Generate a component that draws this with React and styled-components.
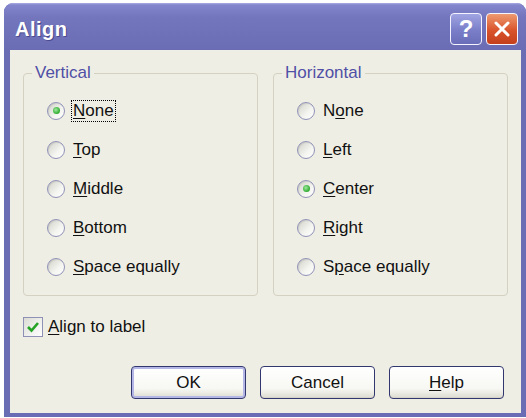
import React from 'react'
import styled, { createGlobalStyle } from 'styled-components'

const GlobalStyle = createGlobalStyle`
body{
    margin:0;
    background:#fff;
    font-family:"Liberation Sans", Arial, sans-serif;
}
`

const Window = styled.div`
margin:3px 0 0 4px;
width:522px;
height:414px;
display:flex;
flex-direction:column;
background:#6a6cb4;
border-radius:9px 9px 0 0;
overflow:hidden;
`

const TitleBar = styled.div`
height:47px;
flex-shrink:0;
box-sizing:border-box;
display:flex;
align-items:center;
padding:5px 8px 0 11px;
background:linear-gradient(to bottom,#a9abe2 0,#8386cc 2px,#7376bd 30%,#6a6cb4 100%);
`

const Title = styled.h1`
flex:1;
margin:0;
font-size:20px;
font-weight:bold;
color:#fff;
text-shadow:1px 1px 0 #4a4b8f;
letter-spacing:.5px;
`

const CaptionBtn = styled.div`
width:32px;
height:32px;
box-sizing:border-box;
margin-left:4px;
border:1px solid #f4f4ff;
border-radius:4px;
display:flex;
align-items:center;
justify-content:center;
color:#fff;
font-size:24px;
font-weight:bold;
background:${p => p.close
    ? 'linear-gradient(to bottom,#ee9a70,#d9532b 55%,#c4401d)'
    : 'linear-gradient(to bottom,#a0a4e2,#7a7ec8 55%,#6a6eb8)'};
`

const Frame = styled.div`
flex:1;
display:flex;
padding:0 5px 4px 6px;
`

const Client = styled.div`
flex:1;
display:flex;
flex-direction:column;
padding:13px 13px 14px 13px;
background:#efeee4;
font-size:17px;
color:#111;
`

const Groups = styled.div`
display:flex;
gap:15px;
`

const Group = styled.fieldset`
flex:1;
margin:0;
padding:8px 0 9px 0;
border:1px solid #d3d1c2;
border-radius:4px;
display:flex;
flex-direction:column;
`

const Legend = styled.legend`
margin-left:8px;
padding:0 3px;
line-height:20px;
color:#4f50a6;
`

const Option = styled.label`
height:39px;
padding-left:23px;
display:flex;
align-items:center;
gap:6px;
line-height:20px;
`

const Radio = styled.span`
width:18px;
height:18px;
box-sizing:border-box;
border-radius:50%;
border:1px solid #9092b8;
background:linear-gradient(135deg,#d2d2ca,#f4f4f0 60%,#fff);
box-shadow:inset 1px 1px 1px rgba(0,0,0,.08);
display:flex;
align-items:center;
justify-content:center;
&::after{
    content:'';
    width:7px;
    height:7px;
    border-radius:50%;
    background:radial-gradient(circle at 40% 40%,#9ee89e,#2eaa2e 70%);
    display:${p => p.checked ? 'block' : 'none'};
}
`

const Text = styled.span`
padding:0 1px;
border:1px dotted ${p => p.focused ? '#000' : 'transparent'};
`

const Key = styled.u`
text-underline-offset:2px;
`

const CheckRow = styled.label`
margin-top:21px;
display:flex;
align-items:center;
gap:5px;
line-height:20px;
`

const Box = styled.span`
width:20px;
height:20px;
box-sizing:border-box;
border:1px solid #8e90b6;
background:linear-gradient(135deg,#dcdcd5,#fff);
display:flex;
align-items:center;
justify-content:center;
`

const Buttons = styled.div`
margin-top:auto;
display:flex;
justify-content:flex-end;
gap:14px;
padding-right:4px;
`

const Button = styled.button`
width:115px;
height:33px;
border:1px solid #33376f;
border-radius:4px;
background:linear-gradient(to bottom,#fff,#f7f7f3 70%,#dddbd0);
font-family:"Liberation Sans", Arial, sans-serif;
font-size:17px;
color:#111;
box-shadow:${p => p.primary ? 'inset 0 0 0 2px #b4b6e6' : 'inset 0 -1px 0 #d6d4c8'};
`

const vertical = [
    { pre: '', key: 'N', post: 'one', checked: true, focused: true },
    { pre: '', key: 'T', post: 'op' },
    { pre: '', key: 'M', post: 'iddle' },
    { pre: '', key: 'B', post: 'ottom' },
    { pre: '', key: 'S', post: 'pace equally' },
]

const horizontal = [
    { pre: 'N', key: 'o', post: 'ne' },
    { pre: '', key: 'L', post: 'eft' },
    { pre: '', key: 'C', post: 'enter', checked: true },
    { pre: '', key: 'R', post: 'ight' },
    { pre: 'S', key: 'p', post: 'ace equally' },
]

function RadioGroup({ title, items }) {
    return (
        <Group>
            <Legend>{title}</Legend>
            {items.map((o, i) => (
                <Option key={i}>
                    <Radio checked={o.checked} />
                    <Text focused={o.focused}>
                        {o.pre}<Key>{o.key}</Key>{o.post}
                    </Text>
                </Option>
            ))}
        </Group>
    )
}

export default function App() {
    return (
        <>
            <GlobalStyle />
            <Window>
                <TitleBar>
                    <Title>Align</Title>
                    <CaptionBtn>?</CaptionBtn>
                    <CaptionBtn close>
                        <svg width="18" height="18" viewBox="0 0 18 18">
                            <path d="M3 3 L15 15 M15 3 L3 15" stroke="#fff" strokeWidth="3" strokeLinecap="round" />
                        </svg>
                    </CaptionBtn>
                </TitleBar>
                <Frame>
                    <Client>
                        <Groups>
                            <RadioGroup title="Vertical" items={vertical} />
                            <RadioGroup title="Horizontal" items={horizontal} />
                        </Groups>
                        <CheckRow>
                            <Box>
                                <svg width="14" height="14" viewBox="0 0 14 14">
                                    <path d="M2 7 L5.5 10.5 L12 3" fill="none" stroke="#25a325" strokeWidth="2.6" />
                                </svg>
                            </Box>
                            <span><Key>A</Key>lign to label</span>
                        </CheckRow>
                        <Buttons>
                            <Button primary>OK</Button>
                            <Button>Cancel</Button>
                            <Button><Key>H</Key>elp</Button>
                        </Buttons>
                    </Client>
                </Frame>
            </Window>
        </>
    )
}
